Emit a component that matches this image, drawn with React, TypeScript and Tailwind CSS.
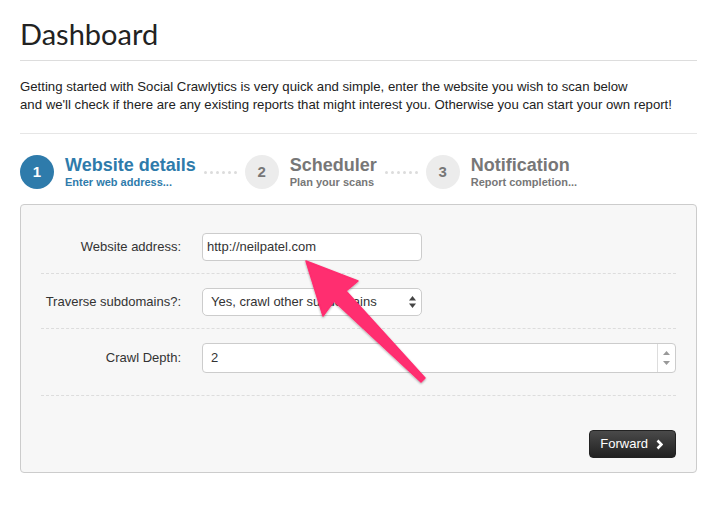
function Dots() {
  return (
    <div className="mx-2 flex gap-[3px]">
      {[0, 1, 2, 3, 4, 5].map((i) => (
        <span key={i} className="h-[3px] w-[3px] rounded-full bg-[#dcdcdc]" />
      ))}
    </div>
  );
}

function Step({
  n,
  title,
  sub,
  active,
}: {
  n: number;
  title: string;
  sub: string;
  active?: boolean;
}) {
  return (
    <div className="flex items-center">
      <div
        className={
          active
            ? "flex h-[34px] w-[34px] items-center justify-center rounded-full bg-[#2e7bab] text-[15px] font-bold text-white"
            : "flex h-[34px] w-[34px] items-center justify-center rounded-full bg-[#ececec] text-[15px] font-bold text-[#777]"
        }
      >
        {n}
      </div>
      <div className="ml-[11px] flex flex-col">
        <span
          className={
            active
              ? "text-[18px] font-bold leading-[20px] text-[#2e7bab]"
              : "text-[18px] font-bold leading-[20px] text-[#777]"
          }
        >
          {title}
        </span>
        <span
          className={
            active
              ? "text-[11px] font-bold leading-[14px] text-[#2e7bab]"
              : "text-[11px] font-bold leading-[14px] text-[#777]"
          }
        >
          {sub}
        </span>
      </div>
    </div>
  );
}

function Row({ label, children }: { label: string; children: React.ReactNode }) {
  return (
    <div className="flex items-center">
      <label className="w-[140px] text-right text-[13px] text-[#333]">{label}</label>
      <div className="ml-[21px] flex-1">{children}</div>
    </div>
  );
}

export default function App() {
  return (
    <div
      className="relative h-[518px] w-[715px] overflow-hidden bg-white pl-5 pr-[18px]"
      style={{ fontFamily: '"Liberation Sans", Arial, sans-serif' }}
    >
      <h1
        className="border-b border-[#dddddd] pt-[17px] pb-[9px] text-[29px] font-normal leading-[34px] text-[#222]"
        style={{ fontFamily: 'Lato, "Open Sans", sans-serif' }}
      >
        Dashboard
      </h1>

      <p className="border-b border-[#e6e6e6] pt-[17px] pb-[19px] text-[13.2px] leading-[18px] text-[#222]">
        Getting started with Social Crawlytics is very quick and simple, enter the website you wish to scan below
        <br />
        and we'll check if there are any existing reports that might interest you. Otherwise you can start your own
        report!
      </p>

      <div className="mt-[21px] flex items-center">
        <Step n={1} title="Website details" sub="Enter web address..." active />
        <Dots />
        <Step n={2} title="Scheduler" sub="Plan your scans" />
        <Dots />
        <Step n={3} title="Notification" sub="Report completion..." />
      </div>

      <div className="mt-[15px] rounded border border-[#cccccc] bg-[#f7f7f7] px-5 pt-[28px] pb-[14px]">
        <Row label="Website address:">
          <div className="flex h-[28px] w-[220px] items-center rounded border border-[#cccccc] bg-white pl-[4px] text-[13px] text-[#333]">
            http://neilpatel.com
          </div>
        </Row>
        <div className="mt-[12px] mb-[14px] border-t border-dashed border-[#dddddd]" />
        <Row label="Traverse subdomains?:">
          <div className="flex h-[28px] w-[220px] items-center justify-between rounded-[5px] border border-[#cccccc] bg-white pl-[8px] pr-[5px] text-[13px] text-[#333]">
            <span>Yes, crawl other subdomains</span>
            <svg width="7" height="12" viewBox="0 0 7 12">
              <path d="M3.5 0 L7 4.5 H0 Z" fill="#444" />
              <path d="M3.5 12 L7 7.5 H0 Z" fill="#444" />
            </svg>
          </div>
        </Row>
        <div className="mt-[12px] mb-[14px] border-t border-dashed border-[#dddddd]" />
        <Row label="Crawl Depth:">
          <div className="flex h-[30px] items-stretch rounded border border-[#cccccc] bg-white text-[13px] text-[#333]">
            <div className="flex flex-1 items-center pl-[8px]">2</div>
            <div className="flex w-[18px] flex-col items-center justify-center gap-[6px] border-l border-[#dddddd]">
              <svg width="7" height="4" viewBox="0 0 7 4">
                <path d="M3.5 0 L7 4 H0 Z" fill="#999" />
              </svg>
              <svg width="7" height="4" viewBox="0 0 7 4">
                <path d="M3.5 4 L7 0 H0 Z" fill="#999" />
              </svg>
            </div>
          </div>
        </Row>
        <div className="mt-[22px] border-t border-dashed border-[#dddddd]" />
        <div className="mt-[34px] flex justify-end">
          <button className="flex h-[28px] items-center gap-[8px] rounded border border-[#222] bg-gradient-to-b from-[#4a4a4a] to-[#222] pl-[10px] pr-[12px] text-[13px] text-white">
            Forward
            <svg width="7" height="11" viewBox="0 0 7 11">
              <polyline points="1.5,1.5 5.5,5.5 1.5,9.5" fill="none" stroke="#fff" strokeWidth="2.6" />
            </svg>
          </button>
        </div>
      </div>

      <svg
        className="pointer-events-none absolute left-0 top-0"
        width="715"
        height="518"
        viewBox="0 0 715 518"
      >
        <defs>
          <filter id="sh" x="-20%" y="-20%" width="140%" height="140%">
            <feDropShadow dx="0" dy="1" stdDeviation="1.2" floodColor="#000" floodOpacity="0.35" />
          </filter>
        </defs>
        <polygon
          points="306,261 358,281 346,291 425,378 421,382 334,301 323,316"
          fill="#ff2d6f"
          stroke="#ff2d6f"
          strokeWidth="1.5"
          strokeLinejoin="round"
          filter="url(#sh)"
        />
      </svg>
    </div>
  );
}
